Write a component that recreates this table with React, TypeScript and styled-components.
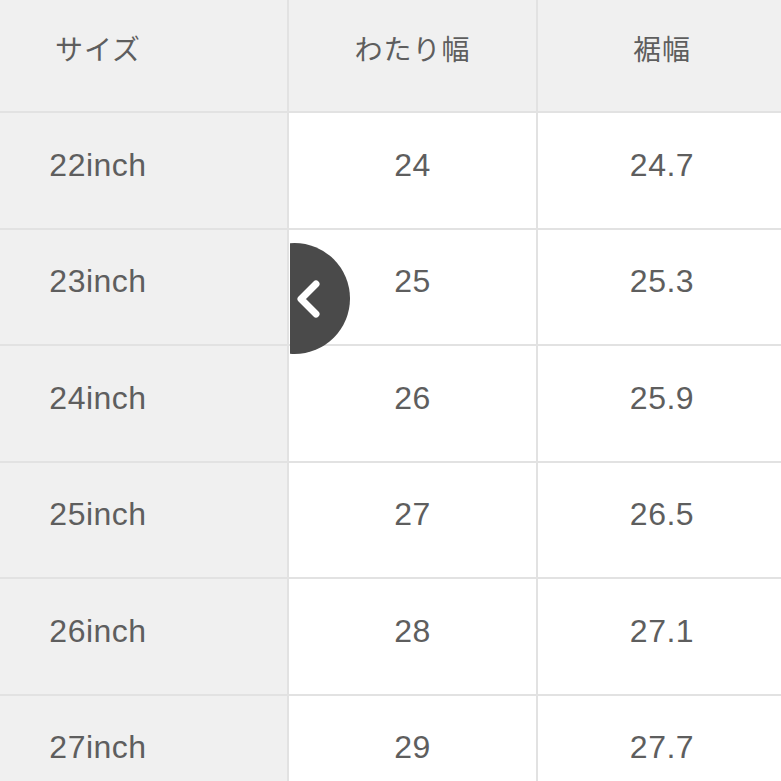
import styled, { createGlobalStyle } from "styled-components";

const GlobalStyle = createGlobalStyle`
  html, body {
    margin: 0;
    padding: 0;
    background: #fff;
  }
`;

const Page = styled.div`
  position: relative;
  width: 781px;
  height: 781px;
  overflow: hidden;
  background: #fff;
`;

const Table = styled.div`
  display: grid;
  grid-template-columns: 380px 249px 250px;
  margin-left: -91px;
`;

const Cell = styled.div<{ $head?: boolean; $grey?: boolean }>`
  box-sizing: border-box;
  height: ${(p) => (p.$head ? "113px" : "116.5px")};
  display: flex;
  align-items: center;
  justify-content: center;
  padding-bottom: ${(p) => (p.$head ? "16px" : "10px")};
  background: ${(p) => (p.$head || p.$grey ? "#f0f0f0" : "#fff")};
  border-right: 2px solid #e2e2e2;
  border-bottom: 2px solid #e2e2e2;
  color: #5e5e5e;
  font-family: ${(p) =>
    p.$head
      ? `"Noto Sans CJK JP", "Noto Sans", sans-serif`
      : `"Liberation Sans", Arial, sans-serif`};
  font-size: ${(p) => (p.$head ? "28px" : "32px")};
  font-weight: 400;
  letter-spacing: ${(p) => (p.$head ? "1px" : "0.5px")};
`;

const PrevButton = styled.div`
  position: absolute;
  left: 239px;
  top: 243px;
  width: 111px;
  height: 111px;
  border-radius: 50%;
  background: #4a4a4a;
  clip-path: inset(0 0 0 51px);
  display: flex;
  align-items: center;
  justify-content: flex-end;
  padding-right: 27px;
  box-sizing: border-box;
`;

const heads = ["サイズ", "わたり幅", "裾幅"];

const rows = [
  ["22inch", "24", "24.7"],
  ["23inch", "25", "25.3"],
  ["24inch", "26", "25.9"],
  ["25inch", "27", "26.5"],
  ["26inch", "28", "27.1"],
  ["27inch", "29", "27.7"],
];

const App = () => {
  return (
    <Page>
      <GlobalStyle />
      <Table>
        {heads.map((h) => (
          <Cell key={h} $head>
            {h}
          </Cell>
        ))}
        {rows.map((row) =>
          row.map((v, i) => (
            <Cell key={row[0] + i} $grey={i === 0}>
              {v}
            </Cell>
          ))
        )}
      </Table>
      <PrevButton>
        <svg width="28" height="42" viewBox="0 0 28 42">
          <path
            d="M21 6 L6 21 L21 36"
            fill="none"
            stroke="#fff"
            strokeWidth="7"
            strokeLinecap="round"
            strokeLinejoin="round"
          />
        </svg>
      </PrevButton>
    </Page>
  );
};

export default App;
